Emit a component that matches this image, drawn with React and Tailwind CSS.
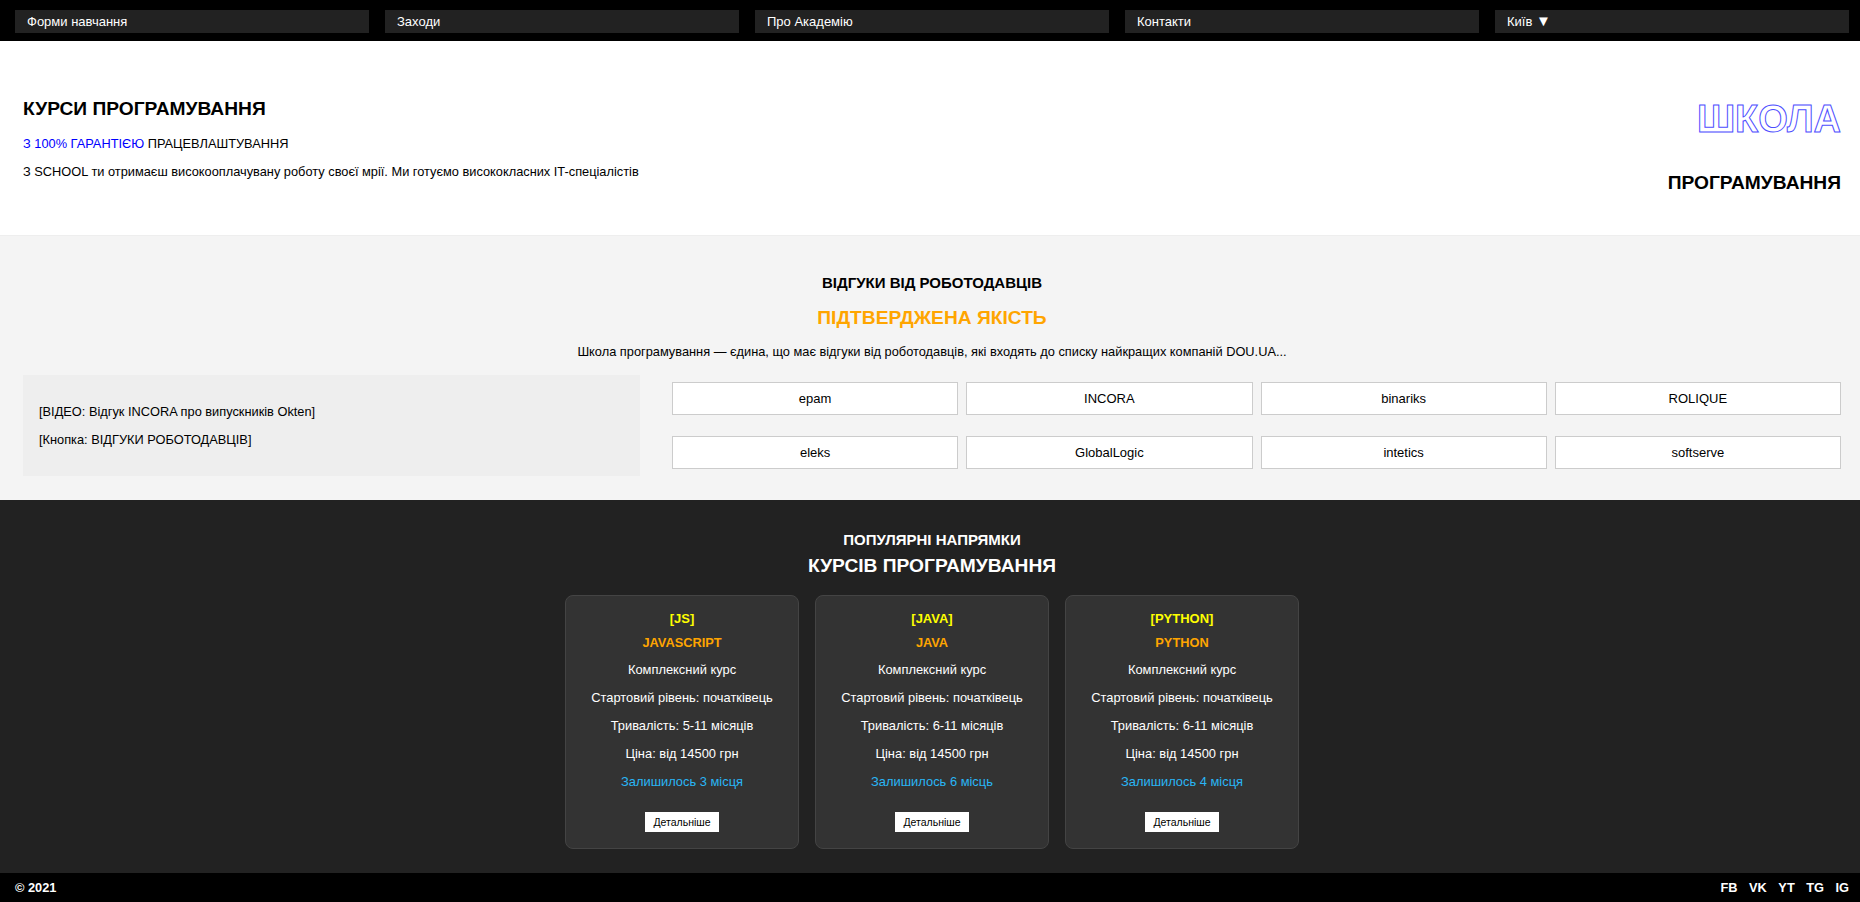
import React from 'react';

const navItems = ['Форми навчання', 'Заходи', 'Про Академію', 'Контакти'];
const logos = ['epam', 'INCORA', 'binariks', 'ROLIQUE', 'eleks', 'GlobalLogic', 'intetics', 'softserve'];
const courses = [
  { tag: '[JS]', name: 'JAVASCRIPT', term: '5-11', left: 'Залишилось 3 місця' },
  { tag: '[JAVA]', name: 'JAVA', term: '6-11', left: 'Залишилось 6 місць' },
  { tag: '[PYTHON]', name: 'PYTHON', term: '6-11', left: 'Залишилось 4 місця' },
];
const socials = ['FB', 'VK', 'YT', 'TG', 'IG'];

function CourseCard({ course }) {
  return (
    <div className="w-[234px] h-[254px] bg-[#333] border border-[#444] rounded-lg pt-[14px] text-center text-[12.9px] leading-[18px] text-white">
      <div className="font-bold text-[13px] text-[#ffff00]">{course.tag}</div>
      <div className="mt-[6px] font-bold text-[12.8px] text-[#ffa500]">{course.name}</div>
      <p className="mt-[9px]">Комплексний курс</p>
      <p className="mt-[10px]">Стартовий рівень: початківець</p>
      <p className="mt-[10px]">Тривалість: {course.term} місяців</p>
      <p className="mt-[10px]">Ціна: від 14500 грн</p>
      <p className="mt-[10px] text-[#29b6f6]">{course.left}</p>
      <button className="mt-[21px] w-[74px] h-5 bg-white text-black text-[10.5px] leading-5">Детальніше</button>
    </div>
  );
}

export default function App() {
  return (
    <div className="overflow-hidden">
      <div className="w-[1864px] font-['Liberation_Sans',Arial,sans-serif] text-black bg-white">
        <nav className="h-[41px] bg-black pt-[10px] px-[15px] grid grid-cols-5 gap-4">
          {navItems.map((item) => (
            <a key={item} className="h-[23px] bg-[#222] text-white text-[13px] leading-[23px] pl-3">{item}</a>
          ))}
          <a className="h-[23px] bg-[#222] text-white text-[13px] leading-[23px] pl-3">Київ <span className="text-[15px] leading-none">▼</span></a>
        </nav>

        <header className="h-[194px] flex justify-between px-[23px]">
          <div>
            <h1 className="mt-[56px] text-[19.2px] leading-[23px] font-bold">КУРСИ ПРОГРАМУВАННЯ</h1>
            <p className="mt-[16px] text-[12.8px] leading-4"><span className="text-[#0000ff]">З 100% ГАРАНТІЄЮ</span> ПРАЦЕВЛАШТУВАННЯ</p>
            <p className="mt-[12px] text-[12.8px] leading-4">З SCHOOL ти отримаєш високооплачувану роботу своєї мрії. Ми готуємо висококласних IT-спеціалістів</p>
          </div>
          <div className="text-right">
            <div className="mt-[55px] text-[38px] leading-[46px] font-bold text-transparent [-webkit-text-stroke:1px_#4d4dff]">ШКОЛА</div>
            <div className="mt-[29px] text-[19.2px] leading-[23px] font-bold">ПРОГРАМУВАННЯ</div>
          </div>
        </header>

        <section className="h-[265px] bg-[#f4f4f4] border-t border-[#eee] pt-[38px] px-[23px]">
          <h2 className="text-center text-[15px] leading-[18px] font-bold">ВІДГУКИ ВІД РОБОТОДАВЦІВ</h2>
          <h3 className="mt-[14px] text-center text-[19.2px] leading-[23px] font-bold text-[#ffa500]">ПІДТВЕРДЖЕНА ЯКІСТЬ</h3>
          <p className="mt-[15px] text-center text-[12.8px] leading-4">Школа програмування — єдина, що має відгуки від роботодавців, які входять до списку найкращих компаній DOU.UA...</p>
          <div className="mt-[15px] flex items-center gap-8">
            <div className="w-[617px] h-[101px] bg-[#eee] px-4 flex flex-col justify-center gap-3 text-[12.8px] leading-4">
              <p>[ВІДЕО: Відгук INCORA про випускників Okten]</p>
              <p>[Кнопка: ВІДГУКИ РОБОТОДАВЦІВ]</p>
            </div>
            <div className="flex-1 grid grid-cols-4 gap-x-2 gap-y-[21px]">
              {logos.map((logo) => (
                <div key={logo} className="h-[33px] bg-white border border-[#ccc] flex items-center justify-center text-[13px]">{logo}</div>
              ))}
            </div>
          </div>
        </section>

        <section className="h-[373px] bg-[#222] pt-[31px] text-white">
          <h2 className="text-center text-[15px] leading-[18px] font-bold">ПОПУЛЯРНІ НАПРЯМКИ</h2>
          <h3 className="mt-[5px] text-center text-[19.2px] leading-[23px] font-bold">КУРСІВ ПРОГРАМУВАННЯ</h3>
          <div className="mt-[18px] flex justify-center gap-4">
            {courses.map((course) => (
              <CourseCard key={course.tag} course={course} />
            ))}
          </div>
        </section>

        <footer className="h-[29px] bg-black px-[15px] flex items-center justify-between text-white text-[12.8px] font-bold">
          <span>© 2021</span>
          <div className="flex gap-[11.5px]">
            {socials.map((s) => (
              <a key={s}>{s}</a>
            ))}
          </div>
        </footer>
      </div>
    </div>
  );
}
